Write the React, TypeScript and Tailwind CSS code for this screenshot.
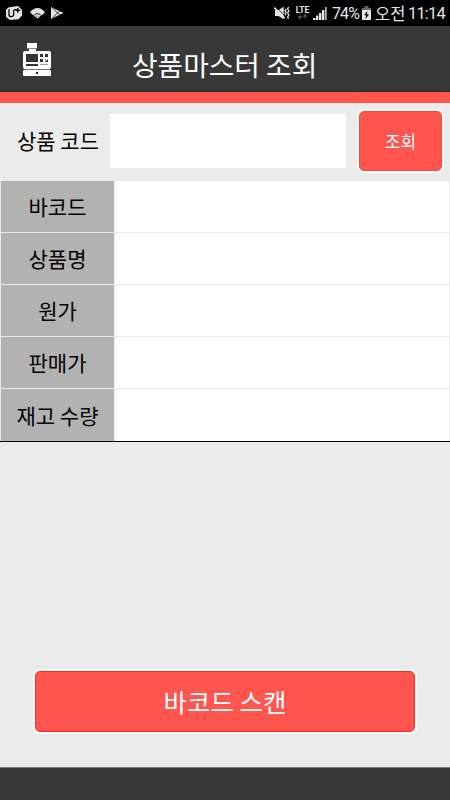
const rows = ['바코드', '상품명', '원가', '판매가', '재고 수량'];

function CarrierIcon() {
  return (
    <svg width="16" height="14" viewBox="0 0 16 14">
      <path d="M3 1.2 12 0l4 4v5.5l-3.5 3.8L4 14 0 11V3.5z" fill="#e4e4e4" />
      <path d="M3 3.2v5.3q0 2.2 2.2 2.2t2.4-2.2V5.2q.1-1.6 1.6-1.6h1.6M11.8 2v4.8M9.7 4.3h4.5" fill="none" stroke="#000" strokeWidth="1.3" />
    </svg>
  );
}

function WifiIcon() {
  return (
    <svg width="15" height="12" viewBox="0 0 15 12">
      <path d="M0 5.5Q3 1 7.5 1T15 5.5L7.5 11.5z" fill="#e4e4e4" />
      <path d="M4.2 8.2q3.3-3.2 6.6 0" fill="none" stroke="#000" strokeWidth=".9" />
      <path d="M6 9.6q1.5-1.4 3 0" fill="none" stroke="#555" strokeWidth=".6" />
    </svg>
  );
}

function PlayIcon() {
  return (
    <svg width="13" height="12" viewBox="0 0 13 12">
      <path d="M0 0 12.5 6 0 12z" fill="#e4e4e4" />
      <path d="M1.2.8 9.5 8.8M1.2 11.2 9.5 3.2" fill="none" stroke="#111" strokeWidth=".8" />
    </svg>
  );
}

function MuteIcon() {
  return (
    <svg width="16" height="14" viewBox="0 0 16 14">
      <path d="M1 4h3.5L9.7.8v12.4L4.5 10H1z" fill="#e4e4e4" />
      <path d="m1.8.6 9.4 9.6" stroke="#000" strokeWidth=".7" />
      <path d="m.3 1.6 10.5 10.6" stroke="#e4e4e4" strokeWidth="1.5" />
      <path d="m12 3-1 1.4 1.2 1.6-1.2 1.6 1.2 1.6M14.6 1l-1 2 1.3 2-1.3 2 1.3 2-1.3 2 1 1.7" fill="none" stroke="#e4e4e4" strokeWidth="1.3" />
    </svg>
  );
}

function LteIcon() {
  return (
    <div className="flex h-[14px] w-[15px] flex-col items-center">
      <span className="font-['Roboto',sans-serif] text-[8.5px] leading-[8px] font-bold text-[#e4e4e4]">LTE</span>
      <svg width="9" height="5" viewBox="0 0 9 5">
        <path d="M0 2.5h4L2 5zM2 0v3M5 2.5h4L7 0zM7 2v3" fill="#555" stroke="#555" strokeWidth=".7" />
      </svg>
    </div>
  );
}

function SignalIcon() {
  return (
    <svg width="14" height="13" viewBox="0 0 14 13">
      <path d="M0 11h2.5v2H0zM3 8.5h2.4V13H3zM6 6h2.4v7H6zM9 3h2.4v10H9z" fill="#e4e4e4" />
      <path d="M12 0h1.7v13H12z" fill="#b5b5b5" />
    </svg>
  );
}

function BatteryIcon() {
  return (
    <svg width="9" height="14" viewBox="0 0 9 14">
      <path d="M2.5 0h4v2H9v3H0V2h2.5z" fill="#666" />
      <path d="M0 4h9v10H0z" fill="#e4e4e4" />
      <path d="M5.5 5 2 9.3h2.2L3.5 13 7 8.4H4.8z" fill="#000" />
    </svg>
  );
}

function RegisterIcon() {
  return (
    <svg width="30" height="34" viewBox="0 0 30 34">
      <path d="M4 0h10v5H4zM6 5h7v3H6z" fill="#fff" />
      <path d="M4 5.5h10" stroke="#888" strokeWidth="1" />
      <rect x="0" y="8" width="28" height="18" rx="2" fill="#fff" />
      <path d="M3 11h12v8H3zM17 11h3v3h-3zM22 11h3v3h-3zM17 16h3v3h-3zM22 16h3v3h-3zM3 21h12v2H3z" fill="#333" />
      <path d="m21.5 18 3-2" stroke="#fff" strokeWidth="1.2" />
      <path d="M17 21h8v1h-8z" fill="#999" />
      <rect x="0" y="27" width="28" height="6" rx="1" fill="#fff" />
      <path d="M1 26.5h26" stroke="#777" strokeWidth="1" />
      <rect x="13" y="29" width="2" height="2" fill="#222" />
    </svg>
  );
}

function StatusBar() {
  return (
    <div className="flex h-[26px] items-center bg-black pr-[6px] pl-[6px] text-[#e4e4e4]">
      <CarrierIcon />
      <div className="ml-2"><WifiIcon /></div>
      <div className="ml-[6px]"><PlayIcon /></div>
      <div className="ml-auto flex items-center">
        <MuteIcon />
        <div className="ml-[5px]"><LteIcon /></div>
        <div className="ml-[3px]"><SignalIcon /></div>
        <span className="ml-[5px] w-[27px] pt-[2px] font-['Roboto',sans-serif] text-[16px] leading-none tracking-[-0.9px]">74%</span>
        <div className="ml-[3px]"><BatteryIcon /></div>
        <span className="ml-[4px] w-[29px] pt-px text-[16.5px] leading-none">오전</span>
        <span className="ml-[4px] w-[36px] pt-[2px] font-['Roboto',sans-serif] text-[16.5px] leading-none tracking-[-0.85px]">11:14</span>
      </div>
    </div>
  );
}

export default function App() {
  return (
    <div className="flex h-[800px] w-[450px] flex-col overflow-hidden bg-[#ebebeb] font-['Noto_Sans_CJK_KR',sans-serif] whitespace-nowrap text-black">
      <StatusBar />
      <header className="flex h-[66px] items-center border-b border-[#263032] bg-[#383838]">
        <div className="flex w-[132px] pt-[3px] pl-[23px]">
          <RegisterIcon />
        </div>
        <h1 className="pt-[12px] text-[27.8px] leading-none text-white">상품마스터 조회</h1>
      </header>
      <div className="h-[11px] bg-[#ff554f]" />

      <div className="flex h-[78px] items-center pr-[6px] pb-[2px]">
        <label htmlFor="code" className="w-[110px] pb-px pl-[17px] text-[21px] leading-none">상품 코드</label>
        <input id="code" className="h-[54px] w-[236px] bg-white outline-none" />
        <button className="ml-auto h-[64px] w-[87px] rounded-[7px] border-2 border-white bg-white text-[17px] leading-none text-white">
          <span className="flex h-full items-center justify-center rounded-[5px] border border-[#ff4338] bg-[#ff554f] pb-px">조회</span>
        </button>
      </div>

      <div className="h-[261px] border-b border-black px-px">
        {rows.map((label) => (
          <div key={label} className="flex h-[52px] border-b border-[#ebebeb] last:border-b-0">
            <div className="flex w-[113px] items-center justify-center bg-[#b2b2b2] text-[21px] leading-none">{label}</div>
            <div className="flex-1 border-l border-[#ebebeb] bg-white" />
          </div>
        ))}
      </div>

      <div className="flex flex-1 items-end justify-center pb-[33px]">
        <button className="h-[65px] w-[384px] rounded-[7px] border-2 border-white bg-white text-[25.5px] leading-none text-white">
          <span className="flex h-full items-center justify-center rounded-[5px] border border-[#ff2a1c] bg-[#ff554f] pb-[2px]">바코드 스캔</span>
        </button>
      </div>
      <footer className="h-[33px] border-t border-[#777] bg-[#383838]" />
    </div>
  );
}
